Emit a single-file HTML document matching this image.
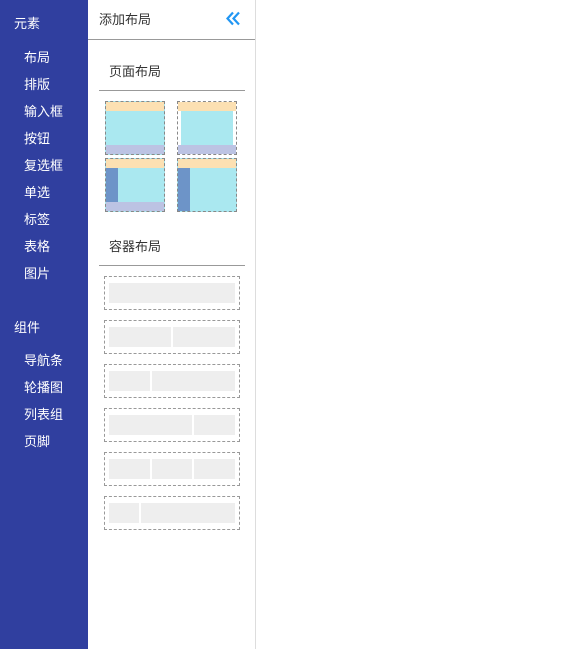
<!DOCTYPE html>
<html><head><meta charset="utf-8"><style>
*{margin:0;padding:0;box-sizing:border-box}
body{width:574px;height:649px;background:#fff;position:relative;overflow:hidden;font-family:"Liberation Sans","Noto Sans CJK SC",sans-serif;}
.side{position:absolute;left:0;top:0;width:88px;height:649px;background:#303f9f;color:#fff;font-size:13px}
.side div{position:absolute;white-space:nowrap}
.panel{position:absolute;left:88px;top:0;width:168px;height:649px;border-right:1px solid #ddd}
.a{position:absolute}
.t{font-size:13px;color:#333;white-space:nowrap}
.pl{position:absolute;width:60px;height:54px;border:1px dashed #888;background:#aae8f0;overflow:hidden}
.pl .h{position:absolute;left:0;top:0;right:0;height:9px;background:#fce0b2}
.pl .f{position:absolute;left:0;bottom:0;right:0;height:9px;background:#bcc3e3}
.pl .l{position:absolute;left:0;top:9px;width:12px;bottom:9px;background:#6d94c8}
.cb{position:absolute;left:104px;width:136px;height:34px;border:1px dashed #999}
.g{position:absolute;top:6px;height:20px;background:#eee}
</style></head><body>
<div class="side">
<div style="left:14px;top:13px">元素</div>
<div style="left:24px;top:47px">布局</div>
<div style="left:24px;top:74px">排版</div>
<div style="left:24px;top:101px">输入框</div>
<div style="left:24px;top:128px">按钮</div>
<div style="left:24px;top:155px">复选框</div>
<div style="left:24px;top:182px">单选</div>
<div style="left:24px;top:209px">标签</div>
<div style="left:24px;top:236px">表格</div>
<div style="left:24px;top:263px">图片</div>
<div style="left:14px;top:317px">组件</div>
<div style="left:24px;top:350px">导航条</div>
<div style="left:24px;top:377px">轮播图</div>
<div style="left:24px;top:404px">列表组</div>
<div style="left:24px;top:431px">页脚</div>
</div>
<div class="panel"></div>
<div class="a t" style="left:99px;top:9px">添加布局</div>
<svg class="a" style="left:225px;top:11px" width="16" height="15" viewBox="0 0 16 15"><path d="M8 1.5L2.5 7.5L8 13.5M14 1.5L8.5 7.5L14 13.5" fill="none" stroke="#2196f3" stroke-width="2.2"/></svg>
<div class="a" style="left:88px;top:39px;width:167px;height:1px;background:#999"></div>
<div class="a t" style="left:109px;top:61px">页面布局</div>
<div class="a" style="left:99px;top:90px;width:146px;height:1px;background:#999"></div>
<div class="pl" style="left:105px;top:101px"><div class="h"></div><div class="f"></div></div>
<div class="pl" style="left:177px;top:101px;background:#fff"><div class="a" style="left:3px;right:3px;top:9px;bottom:9px;background:#aae8f0"></div><div class="h"></div><div class="f"></div></div>
<div class="pl" style="left:105px;top:158px"><div class="h"></div><div class="f"></div><div class="l"></div></div>
<div class="pl" style="left:177px;top:158px"><div class="h"></div><div class="l" style="bottom:0"></div></div>
<div class="a t" style="left:109px;top:236px">容器布局</div>
<div class="a" style="left:99px;top:265px;width:146px;height:1px;background:#999"></div>
<div class="cb" style="top:276px"><div class="g" style="left:4px;width:126px"></div></div>
<div class="cb" style="top:320px"><div class="g" style="left:4px;width:62px"></div><div class="g" style="left:68px;width:62px"></div></div>
<div class="cb" style="top:364px"><div class="g" style="left:4px;width:41px"></div><div class="g" style="left:47px;width:83px"></div></div>
<div class="cb" style="top:408px"><div class="g" style="left:4px;width:83px"></div><div class="g" style="left:89px;width:41px"></div></div>
<div class="cb" style="top:452px"><div class="g" style="left:4px;width:41px"></div><div class="g" style="left:47px;width:40px"></div><div class="g" style="left:89px;width:41px"></div></div>
<div class="cb" style="top:496px"><div class="g" style="left:4px;width:30px"></div><div class="g" style="left:36px;width:94px"></div></div>
</body></html>
